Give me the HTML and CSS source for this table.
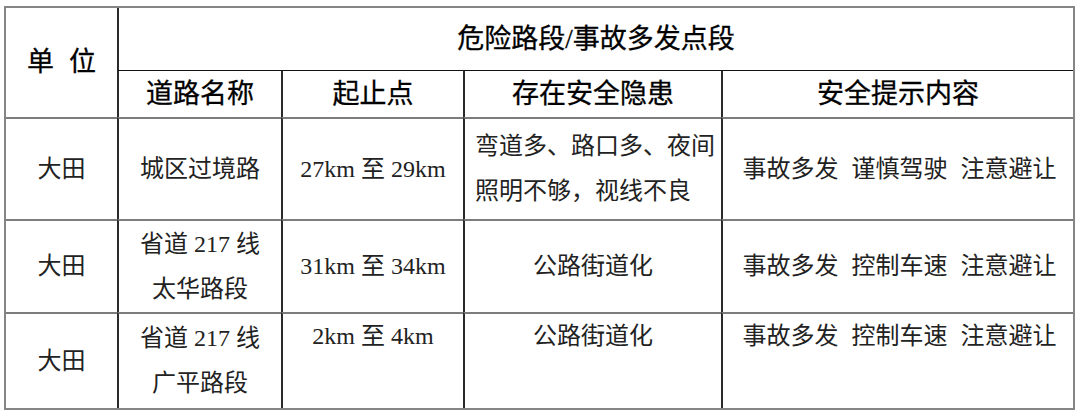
FILE: index.html
```html
<!DOCTYPE html>
<html lang="zh-CN">
<head>
<meta charset="utf-8">
<title>危险路段/事故多发点段</title>
<link rel="stylesheet" href="styles.css">
</head>
<body>
<table class="grid">
  <colgroup>
    <col class="c1"><col class="c2"><col class="c3"><col class="c4"><col class="c5">
  </colgroup>
  <tr class="r-top">
    <th class="unit first" rowspan="2">单<span class="gap"></span>位</th>
    <th class="title" colspan="4">危险路段/事故多发点段</th>
  </tr>
  <tr class="r-head">
    <th>道路名称</th>
    <th>起止点</th>
    <th>存在安全隐患</th>
    <th>安全提示内容</th>
  </tr>
  <tr class="r-a">
    <td class="first">大田</td>
    <td>城区过境路</td>
    <td>27km 至 29km</td>
    <td class="left">弯道多、路口多、夜间<br>照明不够，视线不良</td>
    <td class="tips">事故多发 谨慎驾驶 注意避让</td>
  </tr>
  <tr class="r-b">
    <td class="first">大田</td>
    <td>省道 217 线<br>太华路段</td>
    <td>31km 至 34km</td>
    <td>公路街道化</td>
    <td class="tips">事故多发 控制车速 注意避让</td>
  </tr>
  <tr class="r-c">
    <td class="first">大田</td>
    <td>省道 217 线<br>广平路段</td>
    <td class="top">2km 至 4km</td>
    <td class="top">公路街道化</td>
    <td class="tips top">事故多发 控制车速 注意避让</td>
  </tr>
</table>
</body>
</html>
```

FILE: styles.css
```css
html, body {
  margin: 0;
  padding: 0;
  background: #ffffff;
}

body {
  padding: 6px 0 0 4px;
  font-family: "Liberation Serif", "Noto Sans CJK SC", serif;
  color: #222222;
}

.grid {
  border-collapse: separate;
  border-spacing: 0;
  table-layout: fixed;
  width: 1071px;
  border: 2px solid #858585;
}

.c1 { width: 111px; }
.c2 { width: 164px; }
.c3 { width: 182px; }
.c4 { width: 258px; }
.c5 { width: 352px; }

.grid th,
.grid td {
  padding: 0;
  text-align: center;
  vertical-align: middle;
  border-left: 2px solid #2a2a2a;
  line-height: 45px;
  box-sizing: border-box;
}

.grid th.first,
.grid td.first {
  border-left: none;
}

.grid th {
  font-size: 27px;
  font-weight: normal;
  color: #000;
  -webkit-text-stroke: 0.3px #000;
}

.grid td {
  font-size: 24px;
  border-top: 2px solid #7c7c7c;
}

.r-top { height: 62px; }
.r-head { height: 47px; }
.r-head th { border-top: 1px solid #111; }
.r-a { height: 102px; }
.r-b { height: 93px; }
.r-c { height: 96px; }

.gap {
  display: inline-block;
  width: 15px;
}

.grid td.left {
  text-align: left;
  padding-left: 10px;
}

.grid td.tips {
  word-spacing: 7px;
  padding-left: 3px;
}

.grid td.top {
  vertical-align: top;
}
```
